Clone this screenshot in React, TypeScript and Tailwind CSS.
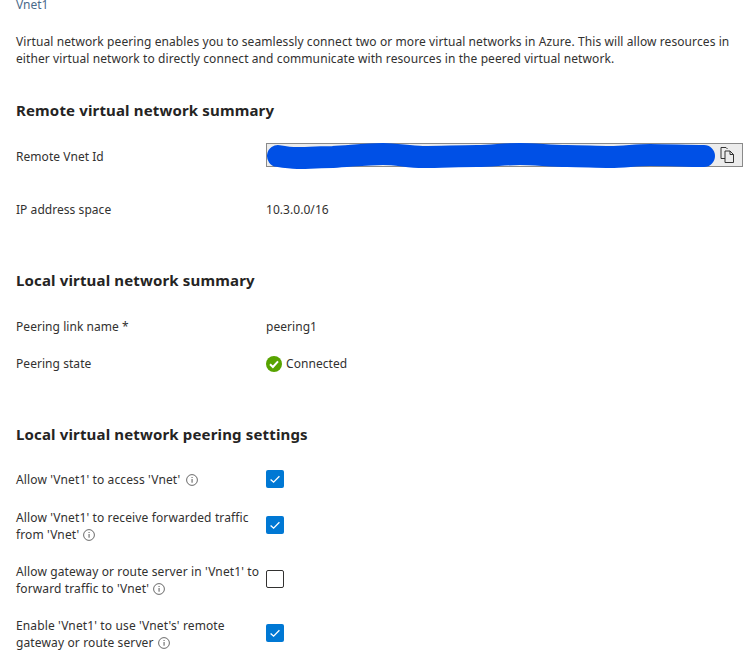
const FONT = "font-['Noto_Sans','Open_Sans',sans-serif]";

function Info({ tight }: { tight?: boolean }) {
  return (
    <svg viewBox="0 0 12 12" className={`inline-block w-3 h-3 align-[-2px] ${tight ? "ml-1" : "ml-1.5"}`}>
      <circle cx="6" cy="6" r="5.4" fill="none" stroke="#444" strokeWidth="0.8" />
      <rect x="5.6" y="5" width="0.9" height="3.7" fill="#444" />
      <rect x="5.6" y="3" width="0.9" height="1" fill="#444" />
    </svg>
  );
}

function Check({ on, className }: { on: boolean; className?: string }) {
  if (!on) return <div className={`w-[18px] h-[18px] rounded-[2px] border border-[#323130] bg-white ${className ?? ""}`} />;
  return (
    <div className={`w-[18px] h-[18px] rounded-[2px] bg-[#0078d4] flex items-center justify-center ${className ?? ""}`}>
      <svg viewBox="0 0 12 12" className="w-3 h-3">
        <path d="M1.6 6.4 L4.6 9.2 L10.4 3.2" fill="none" stroke="#fff" strokeWidth="1.3" />
      </svg>
    </div>
  );
}

function Row({ label, children, className }: { label: string; children: React.ReactNode; className?: string }) {
  return (
    <div className={`grid grid-cols-[250px_1fr] items-center tracking-[0.05px] ${className ?? ""}`}>
      <div>{label}</div>
      <div>{children}</div>
    </div>
  );
}

function Setting({ children, on, className, multi }: { children: React.ReactNode; on: boolean; className: string; multi?: boolean }) {
  return (
    <div className={`grid grid-cols-[250px_1fr] ${multi ? "items-start" : "items-center"} ${className}`}>
      <div className="w-[246px] tracking-[0.13px]">{children}</div>
      <Check on={on} className={multi ? "mt-[7px]" : ""} />
    </div>
  );
}

function H2({ children, className }: { children: React.ReactNode; className: string }) {
  return <h2 className={`text-[15px] tracking-[0.15px] leading-5 font-bold text-[#252423] ${className}`}>{children}</h2>;
}

export default function App() {
  return (
    <div className={`${FONT} w-[754px] h-[669px] overflow-hidden bg-white pl-4 pr-[11px] text-[12px] leading-[17px] text-[#323130]`}>
      <div className="-mt-[4px] h-[17px] text-[#4a6a8a]">Vnet1</div>
      <p className="mt-[20px] tracking-[0.09px]">
        Virtual network peering enables you to seamlessly connect two or more virtual networks in Azure. This will allow resources in
        <br />
        either virtual network to directly connect and communicate with resources in the peered virtual network.
      </p>

      <H2 className="mt-[33px]">Remote virtual network summary</H2>

      <div className="mt-[23px] grid grid-cols-[250px_1fr] items-center tracking-[0.05px]">
        <div className="pt-[2px]">Remote Vnet Id</div>
        <div className="relative h-6 border border-[#8a8a8a] bg-[#ececec] flex items-center justify-end pr-[7px]">
          <svg viewBox="0 0 15 18" className="w-[15px] h-[18px]">
            <path d="M1 1.5 H6 L7.5 3 M1 1.5 V12.5 H5 M5 5 H10 L13.5 8.5 V16.5 H5 Z M10 5 V8.5 H13.5" fill="none" stroke="#333" strokeWidth="1" />
          </svg>
          <svg viewBox="0 0 450 28" className="absolute -left-[1px] -top-[2px] w-[450px] h-[28px]">
            <path
              d="M12 14 C18 15 24 16 31 16 C44 16 55 15 67 15 C85 14 100 12 117 12 C132 12 142 15 157 15 C175 15 193 14 211 14 C226 14 238 12 254 12 C270 12 284 14 301 14 C316 14 330 15 344 15 C358 15 370 13 384 13 C402 13 420 14 438 14"
              fill="none"
              stroke="#0050e6"
              strokeWidth="22"
              strokeLinecap="round"
            />
          </svg>
        </div>
      </div>
      <Row label="IP address space" className="mt-[34px]">10.3.0.0/16</Row>

      <H2 className="mt-[52px]">Local virtual network summary</H2>

      <Row label="Peering link name *" className="mt-[28px]">peering1</Row>
      <Row label="Peering state" className="mt-[20px]">
        <div className="flex items-center gap-1">
          <svg viewBox="0 0 16 16" className="w-4 h-4">
            <circle cx="8" cy="8" r="8" fill="#57a300" />
            <path d="M4 8.3 L6.9 11 L12 5.4" fill="none" stroke="#fff" strokeWidth="2" />
          </svg>
          <span>Connected</span>
        </div>
      </Row>

      <H2 className="mt-[52px]">Local virtual network peering settings</H2>

      <Setting on className="mt-[26px]">Allow 'Vnet1' to access 'Vnet'<Info /></Setting>
      <Setting on multi className="mt-[21px]">Allow 'Vnet1' to receive forwarded traffic from 'Vnet'<Info tight /></Setting>
      <Setting on={false} multi className="mt-[20px]">Allow gateway or route server in 'Vnet1' to forward traffic to 'Vnet'<Info tight /></Setting>
      <Setting on multi className="mt-[20px]">Enable 'Vnet1' to use 'Vnet's' remote gateway or route server<Info tight /></Setting>
    </div>
  );
}
